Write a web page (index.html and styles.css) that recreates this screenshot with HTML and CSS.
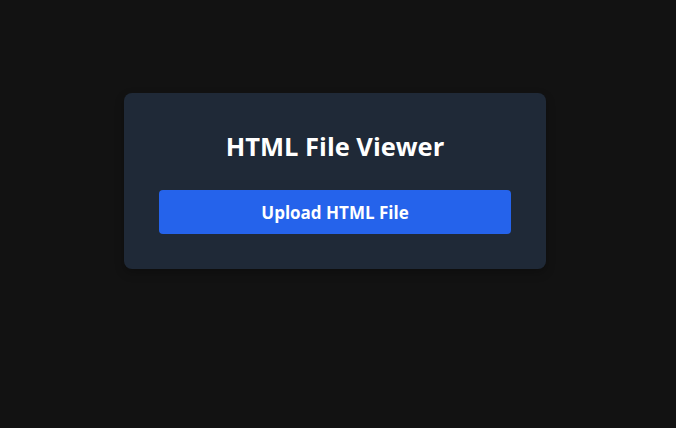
FILE: index.html
```html
<!DOCTYPE html>
<html>
<head>
<meta charset="utf-8">
<link rel="stylesheet" href="styles.css">
</head>
<body>
<main class="page">
  <section class="card">
    <h1 class="title">HTML File Viewer</h1>
    <button class="upload">Upload HTML File</button>
  </section>
</main>
</body>
</html>
```
FILE: styles.css
```css
html, body {
  margin: 0;
  padding: 0;
  background: #121212;
  height: 100%;
}
body {
  font-family: "Open Sans", "Noto Sans", sans-serif;
  color: #fff;
}
.page {
  display: flex;
  align-items: flex-start;
  padding: 93px 0 0 124px;
}
.card {
  width: 422px;
  box-sizing: border-box;
  background: #1f2937;
  border-radius: 8px;
  padding: 35px 35px 35px;
  display: flex;
  flex-direction: column;
  align-items: stretch;
  box-shadow: 0 4px 10px rgba(0,0,0,0.25);
}
.title {
  margin: 0;
  font-size: 25.5px;
  font-weight: 700;
  line-height: 36px;
  text-align: center;
  color: #ffffff;
}
.upload {
  margin-top: 26px;
  height: 44px;
  border: none;
  border-radius: 4px;
  background: #2563eb;
  color: #fff;
  font-family: inherit;
  font-size: 17px;
  font-weight: 700;
  cursor: pointer;
}
```
